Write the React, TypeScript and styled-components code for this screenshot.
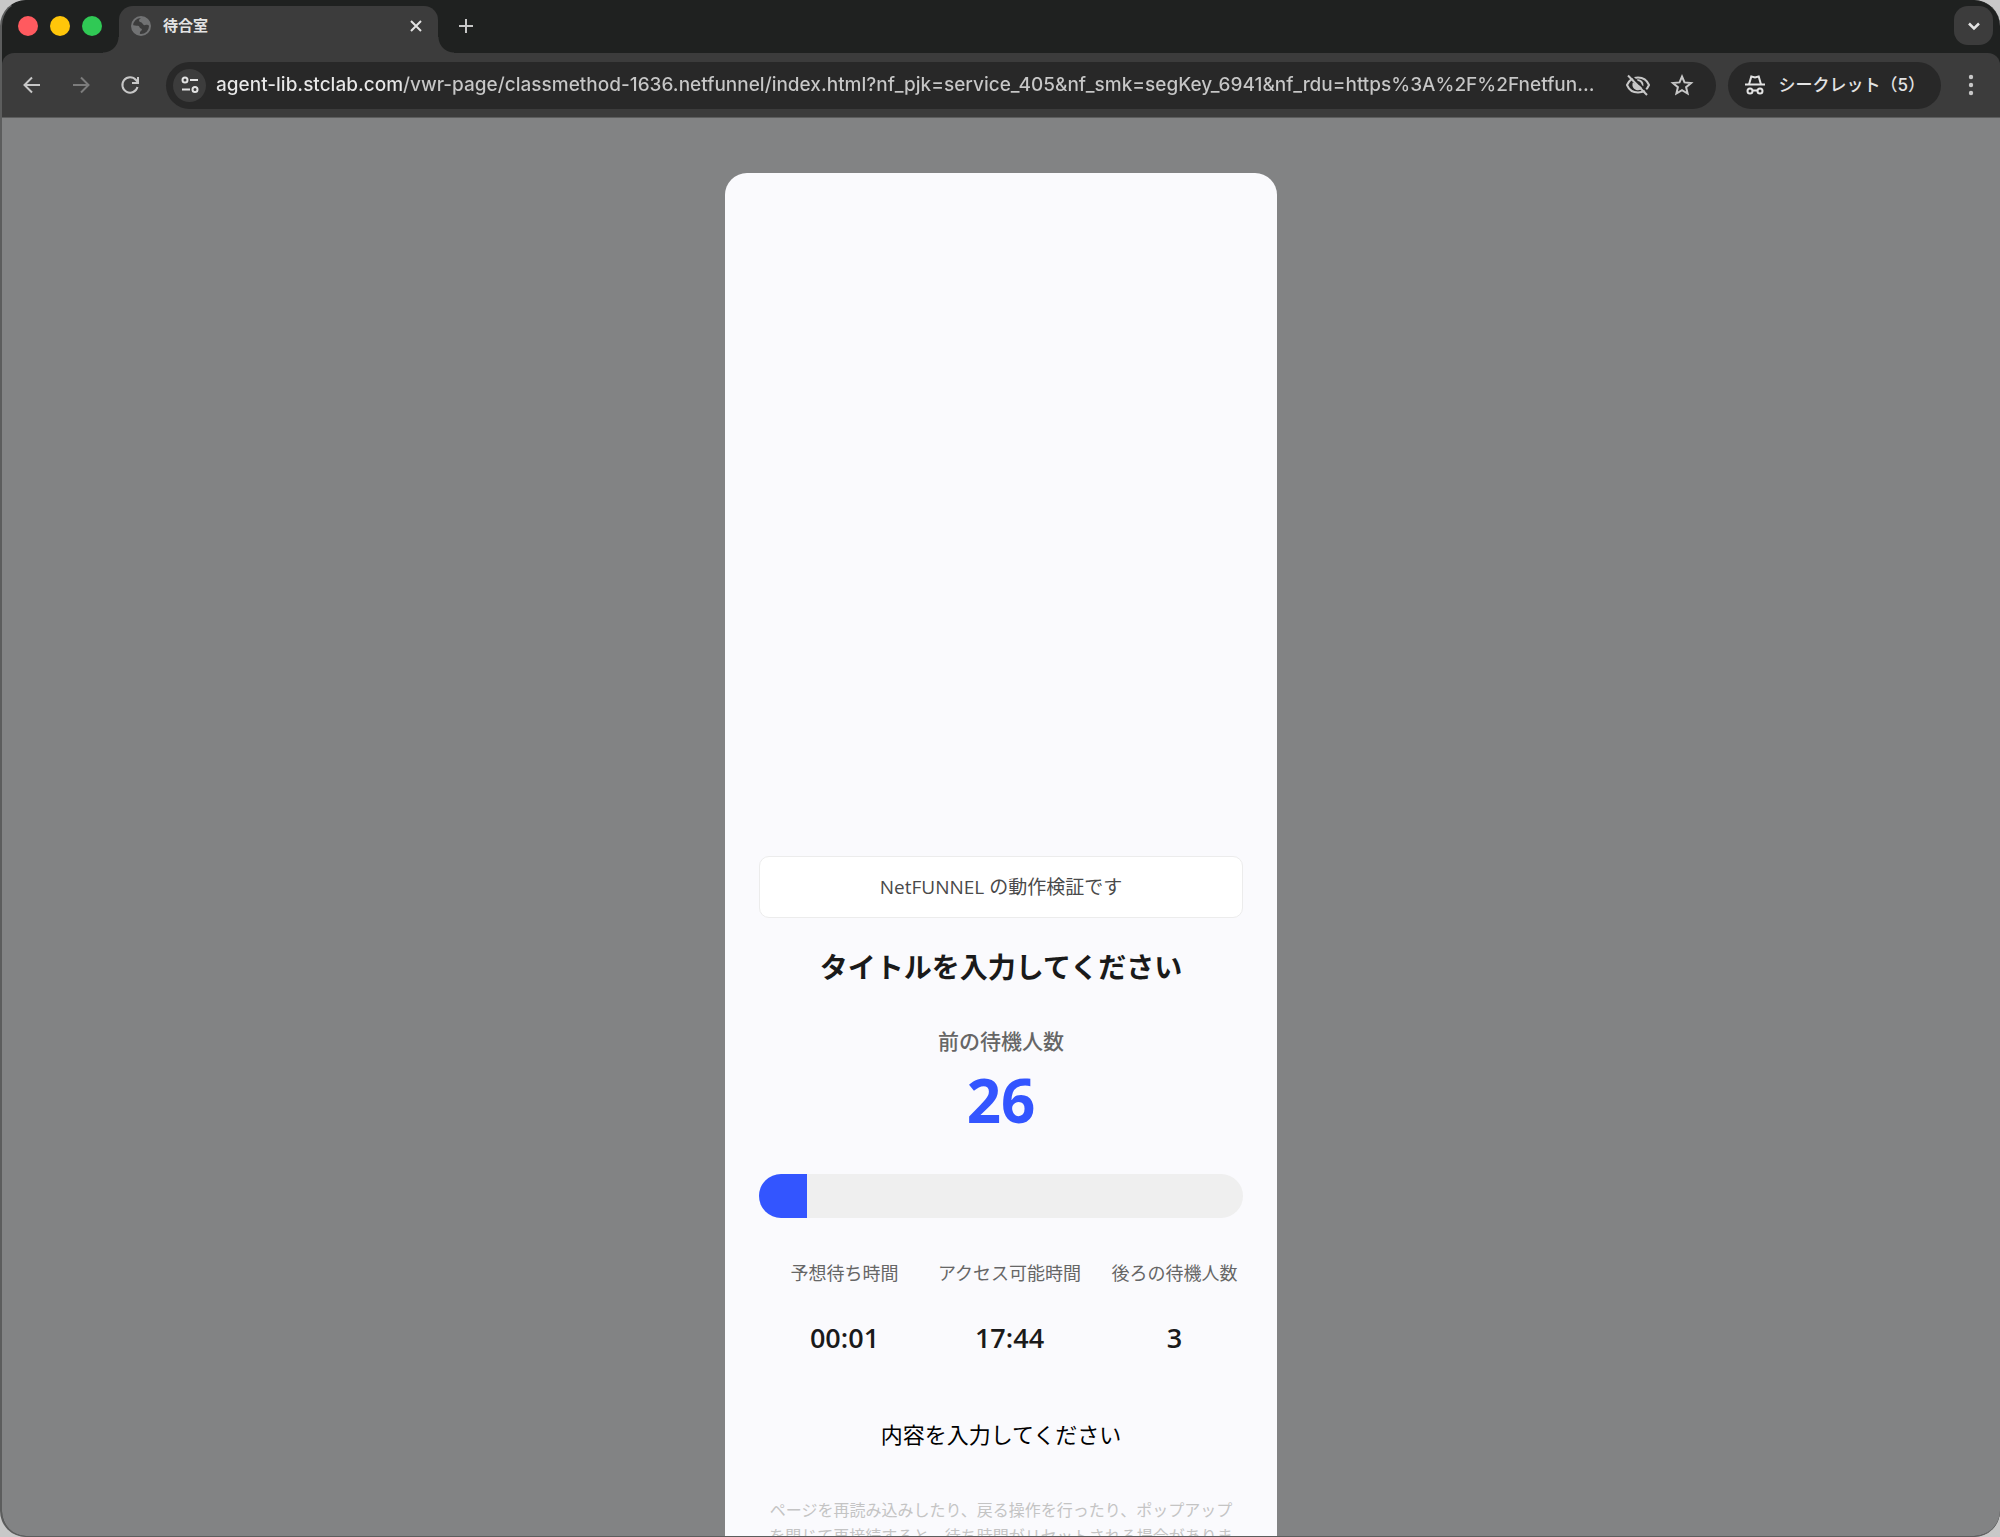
import React from "react";
import styled, { createGlobalStyle, css } from "styled-components";

const uiFont = `Inter, "Noto Sans CJK JP", sans-serif`;
const pageFont = `"Open Sans", "Noto Sans CJK JP", sans-serif`;

const GlobalStyle = createGlobalStyle`
  *, *::before, *::after { box-sizing: border-box; }
  html, body, #root { height: 100%; }
  body { margin: 0; overflow: hidden; background: #c8c8c8; }
  button, input { font: inherit; color: inherit; }
`;

const BrowserWindow = styled.div`
  display: flex;
  flex-direction: column;
  height: 100vh;
  overflow: hidden;
  border: solid #5c5d5d;
  border-width: 1px 0 1px 2px;
  border-top-color: #1f2120;
  border-radius: 26px;
  background: #1f2120;
  font-family: ${uiFont};
  color: #e3e3e3;
`;

const TabStrip = styled.header`
  display: flex;
  align-items: flex-start;
  height: 52px;
  padding: 5px 7px 0 16px;
`;

const TrafficLights = styled.div`
  display: flex;
  gap: 12px;
  padding: 10px 0;
  margin-right: 17px;
`;

const Light = styled.button<{ $color: string }>`
  width: 20px;
  height: 20px;
  padding: 0;
  border: 0;
  border-radius: 50%;
  background: ${(p) => p.$color};
`;

const flare = css`
  content: "";
  position: absolute;
  bottom: 0;
  width: 16px;
  height: 16px;
`;

const Tab = styled.div`
  position: relative;
  display: flex;
  align-items: center;
  gap: 12px;
  width: 319px;
  height: 47px;
  padding: 0 12px 8px;
  border-radius: 14px 14px 0 0;
  background: #3c3c3c;

  &::before {
    ${flare}
    right: 100%;
    background: radial-gradient(circle at 0 0, transparent 15px, #3c3c3c 16px);
  }
  &::after {
    ${flare}
    left: 100%;
    background: radial-gradient(circle at 100% 0, transparent 15px, #3c3c3c 16px);
  }
`;

const TabTitle = styled.span`
  flex: 1;
  font-size: 15px;
  line-height: 20px;
  font-weight: 600;
`;

const IconButton = styled.button<{ $size?: number }>`
  display: grid;
  place-items: center;
  flex: none;
  width: ${(p) => p.$size ?? 20}px;
  height: ${(p) => p.$size ?? 20}px;
  padding: 0;
  border: 0;
  background: none;
`;

const NewTabButton = styled(IconButton)`
  margin: 4px 0 0 12px;
`;

const TabSearchButton = styled(IconButton)`
  margin-left: auto;
  border-radius: 14px;
  background: #3c3c3c;
`;

const Toolbar = styled.nav`
  display: flex;
  align-items: center;
  flex: none;
  height: 65px;
  padding: 0 15px 0 18px;
  border-bottom: 1px solid #5c5d5d;
  border-radius: 12px 12px 0 0;
  background: #3c3c3c;
`;

const NavButtons = styled.div`
  display: flex;
  gap: 25px;
  margin-right: 24px;
`;

const Omnibox = styled.div`
  display: flex;
  align-items: center;
  flex: 1;
  height: 47px;
  padding: 0 20px 0 7px;
  border-radius: 24px;
  background: #282828;
`;

const SiteInfoButton = styled(IconButton)`
  border-radius: 50%;
  background: #3c3c3c;
`;

const AddressInput = styled.input`
  flex: 1;
  min-width: 0;
  margin: 0 16px 0 10px;
  padding: 0;
  border: 0;
  outline: 0;
  font-size: 19px;
  line-height: 28px;
  font-weight: 500;
  color: #c7c7c7;
  background: linear-gradient(90deg, #e8e8e8 187px, #c7c7c7 187px);
  background-clip: text;
  -webkit-background-clip: text;
  -webkit-text-fill-color: transparent;
`;

const OmniboxActions = styled.div`
  display: flex;
  gap: 16px;
`;

const IncognitoBadge = styled.button`
  display: flex;
  align-items: center;
  gap: 12px;
  height: 47px;
  margin: 0 16px 0 12px;
  padding: 0 16px;
  border: 0;
  border-radius: 24px;
  background: #282828;
  font-size: 17px;
  line-height: 24px;
  font-weight: 500;
  white-space: nowrap;
`;

const Viewport = styled.main`
  flex: 1;
  min-height: 0;
  overflow: hidden;
  padding-top: 55px;
  background: #828384;
  font-family: ${pageFont};
  text-align: center;
  color: #1a1a1a;
`;

const Card = styled.section`
  width: 552px;
  max-width: 100%;
  margin: 0 auto;
  padding: 34px 34px 60px;
  border-radius: 22px;
  background: #fafafd;
`;

const HeroImage = styled.div`
  height: 615px;
  margin-bottom: 34px;
`;

const Notice = styled.p`
  margin: 0 0 28px;
  padding: 16px;
  border: 1px solid #ececec;
  border-radius: 10px;
  background: #fff;
  font-size: 19px;
  line-height: 28px;
  color: #4a4a4a;
`;

const Title = styled.h1`
  margin: 0 0 36px;
  font-size: 28px;
  line-height: 42px;
  font-weight: 700;
`;

const AheadLabel = styled.h2`
  margin: 0;
  font-size: 21px;
  line-height: 34px;
  font-weight: 500;
  color: #666;
`;

const AheadCount = styled.strong`
  display: block;
  margin-bottom: 32px;
  font-size: 60px;
  line-height: 84px;
  font-weight: 700;
  color: #3355ff;
`;

const ProgressTrack = styled.div`
  height: 44px;
  margin-bottom: 41px;
  overflow: hidden;
  border-radius: 22px;
  background: #efefef;
`;

const ProgressFill = styled.div`
  height: 100%;
  background: #3355ff;
`;

const Stats = styled.dl`
  display: grid;
  grid-template-columns: repeat(3, minmax(0, 1fr));
  column-gap: 28px;
  margin: 0 0 59px;
  padding-left: 17px;
`;

const Stat = styled.div`
  display: flex;
  flex-direction: column;
  align-items: center;
  gap: 30px;
`;

const StatLabel = styled.dt`
  font-size: 18px;
  line-height: 28px;
  white-space: nowrap;
  color: #666;
`;

const StatValue = styled.dd`
  margin: 0;
  font-size: 27px;
  line-height: 42px;
  font-weight: 600;
`;

const Message = styled.p`
  margin: 0 0 47px;
  font-size: 22px;
  line-height: 32px;
  color: #000;
`;

const Caution = styled.p`
  margin: 0;
  padding: 0 4px;
  font-size: 16px;
  line-height: 26px;
  color: #c4c4c4;
`;

const Icon = styled.svg`
  display: block;
  fill: none;
  stroke: currentColor;
  stroke-width: 2;
`;

const stats = [
  { label: "予想待ち時間", value: "00:01" },
  { label: "アクセス可能時間", value: "17:44" },
  { label: "後ろの待機人数", value: "3" },
];

const progress = 10;

const url =
  "agent-lib.stclab.com/vwr-page/classmethod-1636.netfunnel/index.html?nf_pjk=service_405&nf_smk=segKey_6941&nf_rdu=https%3A%2F%2Fnetfun...";

const GlobeIcon = () => (
  <Icon width="20" height="20" viewBox="0 0 20 20" color="#717273">
    <circle cx="10" cy="10" r="9" />
    <path d="M1 8.500C3 10 5 9.500 7 9.800c2 .4 1.200 2.400 3 2.700 1.500.3 1 2-.3 2.700-1 .6-.7 2-1 3.500C4.500 18.500 1 14 1 8.500Z" fill="currentColor" stroke="none" />
    <path d="M10.500 1c-.5 2-2.500 1.500-2.500 3.500s2.500 1 3.300 2.800c.6 1.400 1.700 2.200 3.200 1.700 1.500-.5 2.500.5 4.500.7C19 4.500 15 1 10.500 1Z" fill="currentColor" stroke="none" />
  </Icon>
);

const App: React.FC = () => (
  <>
    <GlobalStyle />
    <BrowserWindow>
      <TabStrip>
        <TrafficLights>
          <Light $color="#ff5a5f" aria-label="閉じる" />
          <Light $color="#ffc60a" aria-label="最小化" />
          <Light $color="#30c955" aria-label="最大化" />
        </TrafficLights>
        <Tab>
          <GlobeIcon />
          <TabTitle>待合室</TabTitle>
          <IconButton aria-label="タブを閉じる">
            <Icon width="20" height="20" viewBox="0 0 20 20">
              <path d="M5 5l10 10M15 5L5 15" />
            </Icon>
          </IconButton>
        </Tab>
        <NewTabButton $size={32} aria-label="新しいタブ">
          <Icon width="20" height="20" viewBox="0 0 20 20" color="#c7c7c7">
            <path d="M10 3v14M3 10h14" />
          </Icon>
        </NewTabButton>
        <TabSearchButton $size={39} aria-label="タブを検索">
          <Icon width="20" height="20" viewBox="0 0 20 20">
            <path d="M5 7.500l5 5 5-5" strokeWidth="2.500" />
          </Icon>
        </TabSearchButton>
      </TabStrip>

      <Toolbar>
        <NavButtons>
          <IconButton $size={24} aria-label="戻る">
            <Icon width="24" height="24" viewBox="0 0 24 24" color="#c7c7c7">
              <path d="M20 12H5M12 4.500L4.500 12l7.500 7.500" />
            </Icon>
          </IconButton>
          <IconButton $size={24} aria-label="進む">
            <Icon width="24" height="24" viewBox="0 0 24 24" color="#7c7c7c">
              <path d="M4 12h15M12 4.500l7.500 7.500-7.500 7.500" />
            </Icon>
          </IconButton>
          <IconButton $size={24} aria-label="再読み込み">
            <Icon width="24" height="24" viewBox="0 0 24 24" color="#c7c7c7">
              <path d="M19.500 14a7.700 7.700 0 1 1-1.500-7l2 2.500M20 4v6h-6" />
            </Icon>
          </IconButton>
        </NavButtons>
        <Omnibox>
          <SiteInfoButton $size={33} aria-label="サイト情報">
            <Icon width="20" height="20" viewBox="0 0 20 20">
              <circle cx="5" cy="5" r="2.500" />
              <path d="M10 5h8M2 14.500h8" />
              <circle cx="15" cy="14.500" r="2.500" />
            </Icon>
          </SiteInfoButton>
          <AddressInput aria-label="アドレス" defaultValue={url} spellCheck={false} />
          <OmniboxActions>
            <IconButton $size={28} aria-label="サードパーティ Cookie">
              <Icon width="26" height="24" viewBox="0 0 26 24" color="#c7c7c7">
                <path d="M2 12c2-4.800 6.200-7.500 11-7.500S22 7.200 24 12c-2 4.800-6.200 7.500-11 7.500S4 16.800 2 12Z" />
                <path d="M8.500 11a4.500 4.500 0 0 0 8 3.500Z" fill="currentColor" />
                <path d="M12 7.500a4.500 4.500 0 0 1 5.500 5.500" />
                <path d="M4.500 1L24 20.500" stroke="#282828" />
                <path d="M3 2.500L22 22" />
              </Icon>
            </IconButton>
            <IconButton $size={28} aria-label="ブックマーク">
              <Icon width="24" height="24" viewBox="0 0 24 24" color="#c7c7c7">
                <path d="M12 3.500l2.500 5.900 6.600.6-5 4.200 1.500 6.300L12 17.200 6.400 20.500l1.500-6.300-5-4.200 6.600-.6Z" />
              </Icon>
            </IconButton>
          </OmniboxActions>
        </Omnibox>
        <IncognitoBadge>
          <Icon width="22" height="22" viewBox="0 0 22 22">
            <path d="M1 10.500h20" />
            <path d="M5 10.500l2.300-8 3.700 1 3.700-1 2.300 8" />
            <circle cx="6" cy="17" r="2.500" />
            <circle cx="16" cy="17" r="2.500" />
            <path d="M8.500 16.500h5" />
          </Icon>
          シークレット（5）
        </IncognitoBadge>
        <IconButton $size={28} aria-label="メニュー">
          <Icon width="24" height="24" viewBox="0 0 24 24" color="#c7c7c7">
            <g fill="currentColor" stroke="none">
              <circle cx="12" cy="4" r="2.200" />
              <circle cx="12" cy="12" r="2.200" />
              <circle cx="12" cy="20" r="2.200" />
            </g>
          </Icon>
        </IconButton>
      </Toolbar>

      <Viewport>
        <Card>
          <HeroImage />
          <Notice>NetFUNNEL の動作検証です</Notice>
          <Title>タイトルを入力してください</Title>
          <AheadLabel>前の待機人数</AheadLabel>
          <AheadCount>26</AheadCount>
          <ProgressTrack role="progressbar" aria-label="待機の進捗" aria-valuenow={progress}>
            <ProgressFill style={{ width: `${progress}%` }} />
          </ProgressTrack>
          <Stats>
            {stats.map((s) => (
              <Stat key={s.label}>
                <StatLabel>{s.label}</StatLabel>
                <StatValue>{s.value}</StatValue>
              </Stat>
            ))}
          </Stats>
          <Message>内容を入力してください</Message>
          <Caution>
            ページを再読み込みしたり、戻る操作を行ったり、ポップアップを閉じて再接続すると、待ち時間がリセットされる場合がありま
          </Caution>
        </Card>
      </Viewport>
    </BrowserWindow>
  </>
);

export default App;
